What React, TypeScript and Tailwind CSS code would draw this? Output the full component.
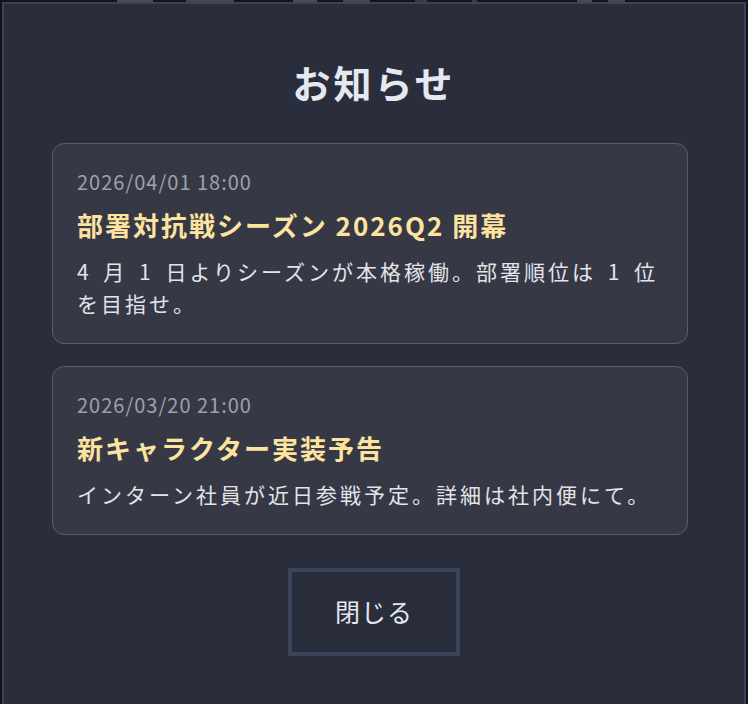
import React from "react";

const blocks: { w: number; c: string }[] = [
  { w: 117, c: "#121419" },
  { w: 36, c: "#4a4c53" },
  { w: 33, c: "#15171c" },
  { w: 48, c: "#45474e" },
  { w: 59, c: "#121419" },
  { w: 24, c: "#4a4c53" },
  { w: 26, c: "#15171c" },
  { w: 27, c: "#45474e" },
  { w: 45, c: "#121419" },
  { w: 12, c: "#3a3c42" },
  { w: 45, c: "#15171c" },
  { w: 5, c: "#3a3c42" },
  { w: 100, c: "#121419" },
  { w: 15, c: "#4a4c53" },
  { w: 16, c: "#121419" },
  { w: 17, c: "#45474e" },
  { w: 123, c: "#121419" },
];

type Notice = { date: string; title: string; body: string };

const notices: Notice[] = [
  {
    date: "2026/04/01 18:00",
    title: "部署対抗戦シーズン 2026Q2 開幕",
    body: "4 月 1 日よりシーズンが本格稼働。部署順位は 1 位を目指せ。",
  },
  {
    date: "2026/03/20 21:00",
    title: "新キャラクター実装予告",
    body: "インターン社員が近日参戦予定。詳細は社内便にて。",
  },
];

export default function App() {
  return (
    <div
      className="w-[748px] h-[704px] overflow-hidden bg-[#121419] flex flex-col"
      style={{ fontFamily: '"Noto Sans CJK JP", "Noto Sans", sans-serif' }}
    >
      <div className="flex h-[2px] shrink-0">
        {blocks.map((b, i) => (
          <div key={i} className="h-[2px]" style={{ width: b.w, background: b.c }} />
        ))}
      </div>
      <div className="ml-[2px] w-[744px] h-[702px] border-2 border-b-0 border-[#3c4358] bg-[#2a2d3b] flex flex-col items-center px-12 pt-[54px]">
        <h1 className="text-[38px] leading-[48px] font-bold text-[#e6e8f0] tracking-[3px]">
          お知らせ
        </h1>
        <div className="mt-[37px] self-stretch mr-2 flex flex-col gap-[22px]">
          {notices.map((n) => (
            <div
              key={n.date}
              className="rounded-[12px] border border-[#5a5e6c] bg-[#363945] px-6 py-6"
            >
              <div className="text-[20px] leading-[28px] text-[#9ea1ab] tracking-[1px]">{n.date}</div>
              <div className="mt-[11px] text-[26px] leading-[36px] font-bold text-[#fde3a0] tracking-[2px]">
                {n.title}
              </div>
              <div className="mt-[12px] text-[21px] leading-[32px] text-[#e2e4ea] tracking-[3px] [word-spacing:4px]">
                {n.body}
              </div>
            </div>
          ))}
        </div>
        <button className="mt-[33px] w-[172px] h-[88px] border-4 border-[#3b4459] bg-[#2a2d3b] text-[25px] text-[#e6e8f0] tracking-[1px] flex items-center justify-center">
          閉じる
        </button>
      </div>
    </div>
  );
}
